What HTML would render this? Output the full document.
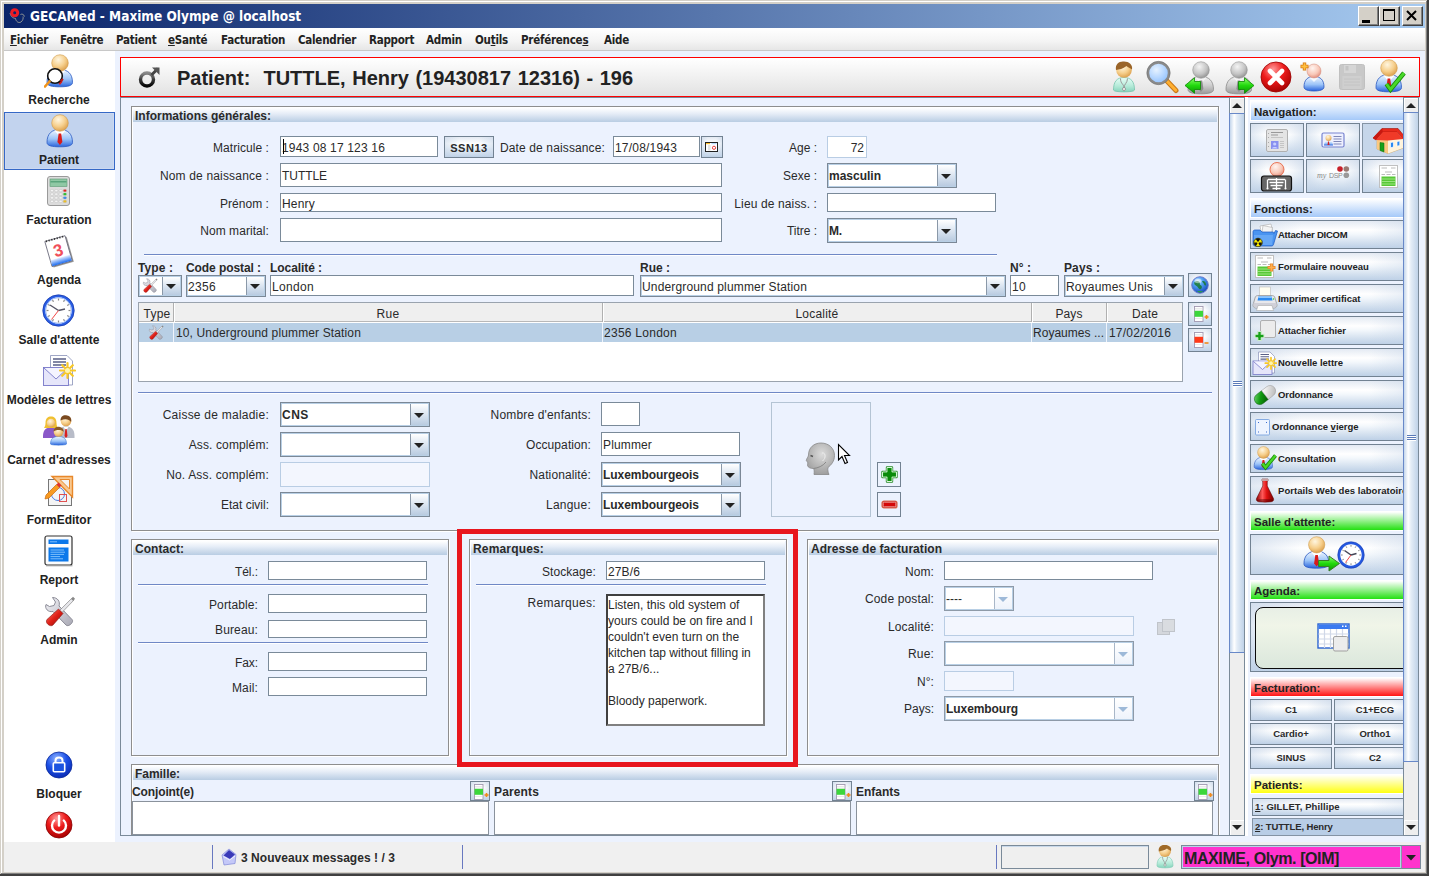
<!DOCTYPE html><html><head><meta charset="utf-8"><title>GECAMed</title><style>
*{box-sizing:border-box;margin:0;padding:0}
html,body{width:1429px;height:876px;overflow:hidden;background:#d4d0c8}
body{font-family:"Liberation Sans",sans-serif;font-size:12px;color:#2a2a2a;position:relative}
.a{position:absolute}
.t{position:absolute;white-space:nowrap;line-height:14px;height:14px}
.b{font-weight:bold}
.r{text-align:right}
.c{text-align:center}
.tf{position:absolute;background:#fff;border:1px solid #7a8a99;white-space:nowrap;overflow:hidden;padding-left:1px}
.tfd{position:absolute;background:#f3f6fe;border:1px solid #b9cde4;}
.cb{position:absolute;background:#fff;border:1px solid #7b8896;box-shadow:inset 0 0 0 1px #b8cfe5;white-space:nowrap;overflow:hidden;padding-left:1px}
.cb .ar{position:absolute;right:1px;top:1px;bottom:1px;width:18px;border-left:1px solid #8a98a8;background:linear-gradient(#fff,#dbe5f1 50%,#b9cbe0)}
.cb .ar:after{content:"";position:absolute;left:3px;top:50%;margin-top:-2px;border:5px solid transparent;border-top:5px solid #222;border-bottom:0}
.cbd{border-color:#8e9aa8}
.cbd .ar{background:linear-gradient(#fff,#eef3fb);border-left-color:#a9b7c8}
.cbd .ar:after{border-top-color:#9db9d8}
.pn{position:absolute;border:1px solid #8e8e8e;box-shadow:inset 1px 1px 0 #fff,1px 1px 0 #fff}
.ph{position:absolute;left:1px;right:1px;top:1px;height:14px;background:linear-gradient(#ffffff,#e6edf7 40%,#b9cde3);}
.sep{position:absolute;height:1px;background:#6f88c6;box-shadow:0 1px 0 #fff}
.btn{position:absolute;border:1px solid #728292;background:linear-gradient(90deg,rgba(196,212,232,.5),rgba(255,255,255,0) 30%,rgba(255,255,255,0) 70%,rgba(196,212,232,.5)),linear-gradient(#e4eaf3,#ffffff 33%,#f4f8fc 48%,#bdd0e6)}
</style></head><body>
<div class="a" style="left:0px;top:0px;width:1429px;height:876px;background:#d4d0c8"></div>
<div class="a" style="left:1px;top:1px;width:1427px;height:1px;background:#fff"></div>
<div class="a" style="left:1px;top:1px;width:1px;height:873px;background:#fff"></div>
<div class="a" style="left:1427px;top:0px;width:2px;height:876px;background:#404040"></div>
<div class="a" style="left:0px;top:874px;width:1429px;height:2px;background:#404040"></div>
<div class="a" style="left:1426px;top:1px;width:1px;height:873px;background:#808080"></div>
<div class="a" style="left:1px;top:873px;width:1426px;height:1px;background:#808080"></div>
<div class="a" style="left:4px;top:4px;width:1421px;height:24px;background:linear-gradient(90deg,#0a246a,#a6caf0)"></div>
<div class="t b" style="left:30px;top:6px;height:20px;line-height:20px;font-size:13.5px;color:#fff;font-family:'DejaVu Sans Condensed','Liberation Sans',sans-serif">GECAMed - Maxime Olympe @ localhost</div>
<div class="a" style="left:4px;top:28px;width:1421px;height:23px;background:linear-gradient(#fff,#f4f4f4 60%,#e6e6e6);border-bottom:1px solid #c8c8c8"></div>
<div class="a" style="left:4px;top:51px;width:111px;height:791px;background:#fff"></div>
<div class="a" style="left:115px;top:51px;width:1310px;height:791px;background:#ecf2fe"></div>
<div class="a" style="left:4px;top:842px;width:1421px;height:30px;background:#f0f0f0"></div>
<div class="a" style="left:1358px;top:6px;width:21px;height:20px;background:#d4d0c8;border:1px solid;border-color:#fff #404040 #404040 #fff;box-shadow:inset -1px -1px 0 #808080"></div>
<div class="a" style="left:1379px;top:6px;width:21px;height:20px;background:#d4d0c8;border:1px solid;border-color:#fff #404040 #404040 #fff;box-shadow:inset -1px -1px 0 #808080"></div>
<div class="a" style="left:1402px;top:6px;width:21px;height:20px;background:#d4d0c8;border:1px solid;border-color:#fff #404040 #404040 #fff;box-shadow:inset -1px -1px 0 #808080"></div>
<div class="a" style="left:1362px;top:20px;width:8px;height:3px;background:#000"></div>
<div class="a" style="left:1383px;top:9px;width:12px;height:12px;border:1px solid #000;border-top-width:2px"></div>
<svg class="a" style="left:1406px;top:10px" width="12" height="11"><path d="M1 1 L10 10 M10 1 L1 10" stroke="#000" stroke-width="2" fill="none"/></svg>
<div class="t b" style="left:10px;top:33px;font-family:'DejaVu Sans Condensed','Liberation Sans',sans-serif;font-size:11.5px;letter-spacing:-0.25px;color:#222"><u>F</u>ichier</div>
<div class="t b" style="left:60px;top:33px;font-family:'DejaVu Sans Condensed','Liberation Sans',sans-serif;font-size:11.5px;letter-spacing:-0.25px;color:#222">Fenêtre</div>
<div class="t b" style="left:116px;top:33px;font-family:'DejaVu Sans Condensed','Liberation Sans',sans-serif;font-size:11.5px;letter-spacing:-0.25px;color:#222">Patient</div>
<div class="t b" style="left:168px;top:33px;font-family:'DejaVu Sans Condensed','Liberation Sans',sans-serif;font-size:11.5px;letter-spacing:-0.25px;color:#222"><u>e</u>Santé</div>
<div class="t b" style="left:221px;top:33px;font-family:'DejaVu Sans Condensed','Liberation Sans',sans-serif;font-size:11.5px;letter-spacing:-0.25px;color:#222">Facturation</div>
<div class="t b" style="left:298px;top:33px;font-family:'DejaVu Sans Condensed','Liberation Sans',sans-serif;font-size:11.5px;letter-spacing:-0.25px;color:#222">Calendrier</div>
<div class="t b" style="left:369px;top:33px;font-family:'DejaVu Sans Condensed','Liberation Sans',sans-serif;font-size:11.5px;letter-spacing:-0.25px;color:#222">Rapport</div>
<div class="t b" style="left:426px;top:33px;font-family:'DejaVu Sans Condensed','Liberation Sans',sans-serif;font-size:11.5px;letter-spacing:-0.25px;color:#222">Admin</div>
<div class="t b" style="left:475px;top:33px;font-family:'DejaVu Sans Condensed','Liberation Sans',sans-serif;font-size:11.5px;letter-spacing:-0.25px;color:#222">Ou<u>t</u>ils</div>
<div class="t b" style="left:521px;top:33px;font-family:'DejaVu Sans Condensed','Liberation Sans',sans-serif;font-size:11.5px;letter-spacing:-0.25px;color:#222">Préférence<u>s</u></div>
<div class="t b" style="left:604px;top:33px;font-family:'DejaVu Sans Condensed','Liberation Sans',sans-serif;font-size:11.5px;letter-spacing:-0.25px;color:#222">Aide</div>
<div class="a" style="left:4px;top:112px;width:111px;height:58px;background:#c2d3ee;border:1px solid #3568c6;box-shadow:inset 0 0 0 1px #ccd9f1"></div>
<div class="t c b" style="left:-91px;width:300px;top:93px;font-size:12px;color:#222">Recherche</div>
<div class="t c b" style="left:-91px;width:300px;top:153px;font-size:12px;color:#222">Patient</div>
<div class="t c b" style="left:-91px;width:300px;top:213px;font-size:12px;color:#222">Facturation</div>
<div class="t c b" style="left:-91px;width:300px;top:273px;font-size:12px;color:#222">Agenda</div>
<div class="t c b" style="left:-91px;width:300px;top:333px;font-size:12px;color:#222">Salle d'attente</div>
<div class="t c b" style="left:-91px;width:300px;top:393px;font-size:12px;color:#222">Modèles de lettres</div>
<div class="t c b" style="left:-91px;width:300px;top:453px;font-size:12px;color:#222">Carnet d'adresses</div>
<div class="t c b" style="left:-91px;width:300px;top:513px;font-size:12px;color:#222">FormEditor</div>
<div class="t c b" style="left:-91px;width:300px;top:573px;font-size:12px;color:#222">Report</div>
<div class="t c b" style="left:-91px;width:300px;top:633px;font-size:12px;color:#222">Admin</div>
<div class="t c b" style="left:-91px;width:300px;top:787px;font-size:12px;color:#222">Bloquer</div>
<div class="a" style="left:212px;top:845px;width:1px;height:24px;background:#6878c0"></div>
<div class="a" style="left:462px;top:845px;width:1px;height:24px;background:#6878c0"></div>
<div class="a" style="left:996px;top:845px;width:1px;height:24px;background:#6878c0"></div>
<div class="t b" style="left:241px;top:851px;letter-spacing:0.050px;">3 Nouveaux messages ! / 3</div>
<div class="a" style="left:1001px;top:845px;width:148px;height:24px;background:#efefef;border:1px solid #7a8a99;box-shadow:inset 0 1px 0 #c8d8ea"></div>
<div class="a" style="left:1181px;top:845px;width:240px;height:24px;background:#ff33cc;border:1px solid #7a8a99"></div>
<div class="a" style="left:1182px;top:846px;width:219px;height:22px;background:#ff33cc;border:1px solid #b8d4e8"></div>
<div class="t b" style="left:1184px;top:849px;height:20px;line-height:20px;font-size:16px;letter-spacing:-0.404px;color:#222">MAXIME, Olym. [OIM]</div>
<div class="a" style="left:1401px;top:846px;width:1px;height:22px;background:#8a98a8"></div>
<svg class="a" style="left:1406px;top:855px" width="10" height="6"><path d="M0 0H10L5 5.5Z" fill="#222"/></svg>
<div class="a" style="left:120px;top:57px;width:1300px;height:40px;background:linear-gradient(#fff,#f2f2f2 45%,#e2e2e2);border:1px solid #f00;box-shadow:0 1px 0 #c0c8d8"></div>
<div class="t b" style="left:177px;top:66px;height:24px;line-height:24px;font-size:20px;color:#222;word-spacing:1px">Patient:&nbsp; TUTTLE, Henry (19430817 12316) - 196</div>
<div class="a" style="left:120px;top:97px;width:1110px;height:739px;border-left:1px solid #7a8a99;border-top:1px solid #7a8a99"></div>
<div class="a" style="left:1229px;top:97px;width:16px;height:739px;background:#eeeeee;border:1px solid #7a8a99"></div>
<div class="a" style="left:1230px;top:98px;width:14px;height:15px;background:#eeeeee;border-top:1px solid #fff;border-left:1px solid #fff"></div>
<div class="a" style="left:1230px;top:820px;width:14px;height:15px;background:#eeeeee;border-top:1px solid #fff;border-left:1px solid #fff"></div>
<svg class="a" style="left:1232px;top:103px" width="10" height="5"><path d="M0 5H10L5 0Z" fill="#222"/></svg>
<svg class="a" style="left:1232px;top:825px" width="10" height="5"><path d="M0 0H10L5 5Z" fill="#222"/></svg>
<div class="a" style="left:1229px;top:113px;width:16px;height:540px;background:linear-gradient(90deg,#c4d6ec,#ffffff 30%,#e4edf7 50%,#bfd2e8);border:1px solid #6888c8;border-right-color:#7a8a99"></div>
<div class="a" style="left:1233px;top:381px;width:9px;height:1px;background:#5a7ab8;box-shadow:0 1px 0 #fff"></div>
<div class="a" style="left:1233px;top:383px;width:9px;height:1px;background:#5a7ab8;box-shadow:0 1px 0 #fff"></div>
<div class="a" style="left:1233px;top:385px;width:9px;height:1px;background:#5a7ab8;box-shadow:0 1px 0 #fff"></div>
<div class="a" style="left:1245px;top:97px;width:3px;height:739px;background:#fff"></div>
<div class="a" style="left:1403px;top:97px;width:16px;height:739px;background:#eeeeee;border:1px solid #7a8a99"></div>
<div class="a" style="left:1404px;top:98px;width:14px;height:15px;background:#eeeeee;border-top:1px solid #fff;border-left:1px solid #fff"></div>
<div class="a" style="left:1404px;top:820px;width:14px;height:15px;background:#eeeeee;border-top:1px solid #fff;border-left:1px solid #fff"></div>
<svg class="a" style="left:1406px;top:103px" width="10" height="5"><path d="M0 5H10L5 0Z" fill="#222"/></svg>
<svg class="a" style="left:1406px;top:825px" width="10" height="5"><path d="M0 0H10L5 5Z" fill="#222"/></svg>
<div class="a" style="left:1403px;top:112px;width:16px;height:650px;background:linear-gradient(90deg,#c4d6ec,#ffffff 30%,#e4edf7 50%,#bfd2e8);border:1px solid #6888c8;border-right-color:#7a8a99"></div>
<div class="a" style="left:1407px;top:435px;width:9px;height:1px;background:#5a7ab8;box-shadow:0 1px 0 #fff"></div>
<div class="a" style="left:1407px;top:437px;width:9px;height:1px;background:#5a7ab8;box-shadow:0 1px 0 #fff"></div>
<div class="a" style="left:1407px;top:439px;width:9px;height:1px;background:#5a7ab8;box-shadow:0 1px 0 #fff"></div>
<div class="pn" style="left:131px;top:106px;width:1088px;height:425px"><div class="ph"></div></div>
<div class="t b" style="left:135px;top:109px;letter-spacing:-0.001px;">Informations générales:</div>
<div class="t r " style="left:-31px;width:300px;top:141px;letter-spacing:0.059px;">Matricule :</div>
<div class="tf" style="left:280px;top:136px;width:158px;height:21px;line-height:22px;letter-spacing:0.171px;">1943 08 17 123 16</div>
<div class="a" style="left:283px;top:139px;width:1px;height:15px;background:#000"></div>
<div class="btn" style="left:444px;top:136px;width:50px;height:22px"></div>
<div class="t c b" style="left:319px;width:300px;top:141px;font-size:11px;letter-spacing:0.55px">SSN13</div>
<div class="t " style="left:500px;top:141px;letter-spacing:0.126px;">Date de naissance:</div>
<div class="tf" style="left:613px;top:136px;width:87px;height:21px;line-height:22px;letter-spacing:0.194px;">17/08/1943</div>
<div class="btn" style="left:701px;top:136px;width:22px;height:22px"></div>
<div class="t r " style="left:-31px;width:300px;top:169px;letter-spacing:0.169px;">Nom de naissance :</div>
<div class="tf" style="left:280px;top:163px;width:442px;height:24px;line-height:25px;letter-spacing:-0.056px;">TUTTLE</div>
<div class="t r " style="left:-31px;width:300px;top:197px;letter-spacing:0.039px;">Prénom :</div>
<div class="tf" style="left:280px;top:193px;width:442px;height:19px;line-height:20px;letter-spacing:0.198px;">Henry</div>
<div class="t r " style="left:-31px;width:300px;top:224px;letter-spacing:0.066px;">Nom marital:</div>
<div class="tf" style="left:280px;top:218px;width:442px;height:24px;line-height:25px;"></div>
<div class="t r " style="left:517px;width:300px;top:141px;letter-spacing:-0.004px;">Age :</div>
<div class="tfd" style="left:827px;top:136px;width:40px;height:22px;line-height:22px;text-align:right;padding-right:2px;background:#fff">72</div>
<div class="t r " style="left:517px;width:300px;top:169px;letter-spacing:-0.003px;">Sexe :</div>
<div class="cb" style="left:827px;top:163px;width:130px;height:25px;line-height:25px;font-weight:bold;letter-spacing:-0.003px;">masculin<span class="ar"></span></div>
<div class="t r " style="left:517px;width:300px;top:197px;letter-spacing:0.124px;">Lieu de naiss. :</div>
<div class="tf" style="left:827px;top:193px;width:169px;height:19px;line-height:20px;"></div>
<div class="t r " style="left:517px;width:300px;top:224px;letter-spacing:-0.032px;">Titre :</div>
<div class="cb" style="left:827px;top:218px;width:130px;height:25px;line-height:25px;font-weight:bold;letter-spacing:-0.165px;">M.<span class="ar"></span></div>
<div class="sep" style="left:144px;top:254px;width:853px"></div>
<div class="t b" style="left:138px;top:261px;letter-spacing:0.092px;">Type :</div>
<div class="t b" style="left:186px;top:261px;letter-spacing:-0.077px;">Code postal :</div>
<div class="t b" style="left:270px;top:261px;letter-spacing:-0.068px;">Localité :</div>
<div class="t b" style="left:640px;top:261px;letter-spacing:-0.000px;">Rue :</div>
<div class="t b" style="left:1010px;top:261px;letter-spacing:0.051px;">N° :</div>
<div class="t b" style="left:1064px;top:261px;letter-spacing:0.107px;">Pays :</div>
<div class="cb" style="left:138px;top:275px;width:44px;height:22px;line-height:22px;font-weight:bold;"><span class="ar"></span></div>
<div class="cb" style="left:186px;top:275px;width:80px;height:22px;line-height:22px;letter-spacing:0.326px;">2356<span class="ar"></span></div>
<div class="tf" style="left:270px;top:275px;width:364px;height:21px;line-height:22px;letter-spacing:0.326px;">London</div>
<div class="cb" style="left:640px;top:275px;width:366px;height:22px;line-height:22px;letter-spacing:0.157px;">Underground plummer Station<span class="ar"></span></div>
<div class="tf" style="left:1010px;top:275px;width:49px;height:21px;line-height:22px;letter-spacing:0.326px;">10</div>
<div class="cb" style="left:1064px;top:275px;width:120px;height:22px;line-height:22px;letter-spacing:0.177px;">Royaumes Unis<span class="ar"></span></div>
<div class="btn" style="left:1188px;top:273px;width:24px;height:24px"></div>
<div class="a" style="left:138px;top:302px;width:1045px;height:80px;background:#fff;border:1px solid #9aa3ae"></div>
<div class="a" style="left:139px;top:303px;width:1043px;height:19px;background:#efefef;border-bottom:1px solid #b8b8b8"></div>
<div class="a" style="left:173px;top:303px;width:1px;height:19px;background:#b0b0b0"></div>
<div class="a" style="left:174px;top:303px;width:1px;height:19px;background:#fff"></div>
<div class="a" style="left:602px;top:303px;width:1px;height:19px;background:#b0b0b0"></div>
<div class="a" style="left:603px;top:303px;width:1px;height:19px;background:#fff"></div>
<div class="a" style="left:1031px;top:303px;width:1px;height:19px;background:#b0b0b0"></div>
<div class="a" style="left:1032px;top:303px;width:1px;height:19px;background:#fff"></div>
<div class="a" style="left:1106px;top:303px;width:1px;height:19px;background:#b0b0b0"></div>
<div class="a" style="left:1107px;top:303px;width:1px;height:19px;background:#fff"></div>
<div class="t c " style="left:7px;width:300px;top:307px;letter-spacing:0.246px;">Type</div>
<div class="t c " style="left:238px;width:300px;top:307px;letter-spacing:0.329px;">Rue</div>
<div class="t c " style="left:667px;width:300px;top:307px;letter-spacing:0.205px;">Localité</div>
<div class="t c " style="left:919px;width:300px;top:307px;letter-spacing:0.081px;">Pays</div>
<div class="t c " style="left:995px;width:300px;top:307px;letter-spacing:0.163px;">Date</div>
<div class="a" style="left:139px;top:323px;width:1043px;height:19px;background:#b8cfe5"></div>
<div class="a" style="left:173px;top:323px;width:1px;height:19px;background:#eef3fb"></div>
<div class="a" style="left:602px;top:323px;width:1px;height:19px;background:#eef3fb"></div>
<div class="a" style="left:1031px;top:323px;width:1px;height:19px;background:#eef3fb"></div>
<div class="a" style="left:1106px;top:323px;width:1px;height:19px;background:#eef3fb"></div>
<div class="t " style="left:176px;top:326px;letter-spacing:0.136px;">10, Underground plummer Station</div>
<div class="t " style="left:604px;top:326px;letter-spacing:0.266px;">2356 London</div>
<div class="t " style="left:1033px;top:326px;letter-spacing:0.025px;">Royaumes ...</div>
<div class="t " style="left:1109px;top:326px;letter-spacing:0.194px;">17/02/2016</div>
<div class="btn" style="left:1188px;top:302px;width:24px;height:24px"></div>
<div class="btn" style="left:1188px;top:328px;width:24px;height:24px"></div>
<div class="sep" style="left:138px;top:392px;width:1074px"></div>
<div class="t r " style="left:-31px;width:300px;top:408px;letter-spacing:0.236px;">Caisse de maladie:</div>
<div class="cb" style="left:280px;top:402px;width:150px;height:25px;line-height:25px;font-weight:bold;letter-spacing:0.5px">CNS<span class="ar"></span></div>
<div class="t r " style="left:-31px;width:300px;top:438px;letter-spacing:0.124px;">Ass. complém:</div>
<div class="cb" style="left:280px;top:432px;width:150px;height:25px;line-height:25px;font-weight:bold;"><span class="ar"></span></div>
<div class="t r " style="left:-31px;width:300px;top:468px;letter-spacing:0.163px;">No. Ass. complém:</div>
<div class="tfd" style="left:280px;top:462px;width:150px;height:25px;line-height:25px;"></div>
<div class="t r " style="left:-31px;width:300px;top:498px;letter-spacing:-0.001px;">Etat civil:</div>
<div class="cb" style="left:280px;top:492px;width:150px;height:25px;line-height:25px;font-weight:bold;"><span class="ar"></span></div>
<div class="t r " style="left:291px;width:300px;top:408px;letter-spacing:0.160px;">Nombre d'enfants:</div>
<div class="tf" style="left:601px;top:402px;width:39px;height:24px;line-height:25px;"></div>
<div class="t r " style="left:291px;width:300px;top:438px;letter-spacing:0.087px;">Occupation:</div>
<div class="tf" style="left:601px;top:432px;width:139px;height:24px;line-height:25px;letter-spacing:0.142px;">Plummer</div>
<div class="t r " style="left:291px;width:300px;top:468px;letter-spacing:0.114px;">Nationalité:</div>
<div class="cb" style="left:601px;top:462px;width:140px;height:25px;line-height:25px;font-weight:bold;letter-spacing:-0.049px;">Luxembourgeois<span class="ar"></span></div>
<div class="t r " style="left:291px;width:300px;top:498px;letter-spacing:0.232px;">Langue:</div>
<div class="cb" style="left:601px;top:492px;width:140px;height:25px;line-height:25px;font-weight:bold;letter-spacing:-0.049px;">Luxembourgeois<span class="ar"></span></div>
<div class="a" style="left:771px;top:402px;width:100px;height:115px;border:1px solid #b4c4d4"></div>
<div class="btn" style="left:877px;top:462px;width:24px;height:25px;background:#ecf2fe"></div>
<div class="btn" style="left:877px;top:492px;width:24px;height:25px;background:#ecf2fe"></div>
<div class="pn" style="left:131px;top:539px;width:318px;height:217px"><div class="ph"></div></div>
<div class="t b" style="left:135px;top:542px;letter-spacing:0.042px;">Contact:</div>
<div class="t r " style="left:-42px;width:300px;top:565px;letter-spacing:-0.068px;">Tél.:</div>
<div class="tf" style="left:268px;top:561px;width:159px;height:19px;line-height:20px;"></div>
<div class="sep" style="left:138px;top:584px;width:290px"></div>
<div class="t r " style="left:-42px;width:300px;top:598px;letter-spacing:0.108px;">Portable:</div>
<div class="tf" style="left:268px;top:594px;width:159px;height:19px;line-height:20px;"></div>
<div class="t r " style="left:-42px;width:300px;top:623px;letter-spacing:0.139px;">Bureau:</div>
<div class="tf" style="left:268px;top:620px;width:159px;height:18px;line-height:19px;"></div>
<div class="sep" style="left:138px;top:642px;width:290px"></div>
<div class="t r " style="left:-42px;width:300px;top:656px;letter-spacing:-0.085px;">Fax:</div>
<div class="tf" style="left:268px;top:652px;width:159px;height:19px;line-height:20px;"></div>
<div class="t r " style="left:-42px;width:300px;top:681px;letter-spacing:0.133px;">Mail:</div>
<div class="tf" style="left:268px;top:677px;width:159px;height:19px;line-height:20px;"></div>
<div class="pn" style="left:469px;top:539px;width:318px;height:217px"><div class="ph"></div></div>
<div class="t b" style="left:473px;top:542px;letter-spacing:0.164px;">Remarques:</div>
<div class="t r " style="left:296px;width:300px;top:565px;letter-spacing:0.070px;">Stockage:</div>
<div class="tf" style="left:606px;top:561px;width:159px;height:19px;line-height:20px;letter-spacing:0.128px;">27B/6</div>
<div class="sep" style="left:476px;top:584px;width:290px"></div>
<div class="t r " style="left:296px;width:300px;top:596px;letter-spacing:0.304px;">Remarques:</div>
<div class="a" style="left:606px;top:594px;width:159px;height:132px;background:#fff;border:2px solid;border-color:#404040 #808080 #808080 #404040"></div>
<div class="t " style="left:608px;top:598px;color:#333letter-spacing:0.023px;">Listen, this old system of</div>
<div class="t " style="left:608px;top:614px;color:#333letter-spacing:0.080px;">yours could be on fire and I</div>
<div class="t " style="left:608px;top:630px;color:#333letter-spacing:0.078px;">couldn't even turn on the</div>
<div class="t " style="left:608px;top:646px;color:#333letter-spacing:0.108px;">kitchen tap without filling in</div>
<div class="t " style="left:608px;top:662px;color:#333letter-spacing:-0.037px;">a 27B/6...</div>
<div class="t " style="left:608px;top:694px;color:#333letter-spacing:0.154px;">Bloody paperwork.</div>
<div class="a" style="left:457px;top:529px;width:341px;height:238px;border:5px solid #e8161e;z-index:5"></div>
<div class="pn" style="left:807px;top:539px;width:412px;height:217px"><div class="ph"></div></div>
<div class="t b" style="left:811px;top:542px;letter-spacing:0.044px;">Adresse de facturation</div>
<div class="t r " style="left:634px;width:300px;top:565px;letter-spacing:0.082px;">Nom:</div>
<div class="tf" style="left:944px;top:561px;width:209px;height:19px;line-height:20px;"></div>
<div class="t r " style="left:634px;width:300px;top:592px;letter-spacing:0.135px;">Code postal:</div>
<div class="cb cbd" style="left:944px;top:586px;width:70px;height:25px;line-height:25px;letter-spacing:0.004px;">----<span class="ar"></span></div>
<div class="t r " style="left:634px;width:300px;top:620px;letter-spacing:0.145px;">Localité:</div>
<div class="tfd" style="left:944px;top:616px;width:190px;height:20px;line-height:20px;"></div>
<div class="t r " style="left:634px;width:300px;top:647px;letter-spacing:0.163px;">Rue:</div>
<div class="cb cbd" style="left:944px;top:641px;width:190px;height:25px;line-height:25px;font-weight:bold;"><span class="ar"></span></div>
<div class="t r " style="left:634px;width:300px;top:675px;letter-spacing:0.067px;">N°:</div>
<div class="tfd" style="left:944px;top:671px;width:70px;height:20px;line-height:20px;"></div>
<div class="t r " style="left:634px;width:300px;top:702px;letter-spacing:-0.002px;">Pays:</div>
<div class="cb cbd" style="left:944px;top:696px;width:190px;height:25px;line-height:25px;font-weight:bold;letter-spacing:-0.067px;">Luxembourg<span class="ar"></span></div>
<div class="a" style="left:1157px;top:622px;width:13px;height:13px;background:#d4d7dc;border:1px solid #c0c4ca"></div>
<div class="a" style="left:1162px;top:619px;width:13px;height:13px;background:#d9dce0;border:1px solid #c0c4ca"></div>
<div class="pn" style="left:131px;top:764px;width:1088px;height:71px;border-bottom:0"><div class="ph"></div></div>
<div class="t b" style="left:135px;top:767px;letter-spacing:-0.043px;">Famille:</div>
<div class="t b" style="left:132px;top:785px;letter-spacing:-0.120px;">Conjoint(e)</div>
<div class="a" style="left:132px;top:801px;width:357px;height:34px;background:#fff;border:1px solid #8a929c"></div>
<div class="btn" style="left:470px;top:781px;width:20px;height:20px"></div>
<div class="t b" style="left:494px;top:785px;letter-spacing:0.140px;">Parents</div>
<div class="a" style="left:494px;top:801px;width:357px;height:34px;background:#fff;border:1px solid #8a929c"></div>
<div class="btn" style="left:832px;top:781px;width:20px;height:20px"></div>
<div class="t b" style="left:856px;top:785px;letter-spacing:-0.001px;">Enfants</div>
<div class="a" style="left:856px;top:801px;width:357px;height:34px;background:#fff;border:1px solid #8a929c"></div>
<div class="btn" style="left:1194px;top:781px;width:20px;height:20px"></div>
<div class="a" style="left:117px;top:836px;width:1127px;height:6px;background:#ecf2fe"></div>
<div class="a" style="left:120px;top:835px;width:1110px;height:1px;background:#7a8a99"></div>
<div class="a" style="left:1250px;top:97px;width:153px;height:739px;overflow:hidden">
<div class="a" style="left:0px;top:3px;width:160px;height:21px;background:linear-gradient(#fff,#a5c9f9);border:1px solid #fff"></div>
<div class="t b" style="left:4px;top:8px;font-size:11.5px;color:#222">Navigation:</div>
<div class="btn" style="left:0px;top:26px;width:54px;height:34px;"></div>
<div class="btn" style="left:56px;top:26px;width:54px;height:34px;"></div>
<div class="a" style="left:112px;top:26px;width:54px;height:34px;background:#c6d6ea;border:1px solid #8493a4"></div>
<div class="btn" style="left:0px;top:62px;width:54px;height:34px;"></div>
<div class="btn" style="left:56px;top:62px;width:54px;height:34px;"></div>
<div class="btn" style="left:112px;top:62px;width:54px;height:34px;"></div>
<div class="a" style="left:0px;top:101px;width:160px;height:20px;background:linear-gradient(#fff,#a5c9f9);border:1px solid #fff"></div>
<div class="t b" style="left:4px;top:105px;font-size:11.5px;color:#222">Fonctions:</div>
<div class="btn" style="left:0px;top:123px;width:170px;height:29px;"></div>
<div class="t b" style="left:28px;top:131px;font-size:9.5px;letter-spacing:-0.253px;color:#222">Attacher DICOM</div>
<div class="btn" style="left:0px;top:155px;width:170px;height:29px;"></div>
<div class="t b" style="left:28px;top:163px;font-size:9.5px;letter-spacing:0.006px;color:#222">Formulaire nouveau</div>
<div class="btn" style="left:0px;top:187px;width:170px;height:29px;"></div>
<div class="t b" style="left:28px;top:195px;font-size:9.5px;letter-spacing:-0.031px;color:#222">Imprimer certificat</div>
<div class="btn" style="left:0px;top:219px;width:170px;height:29px;"></div>
<div class="t b" style="left:28px;top:227px;font-size:9.5px;letter-spacing:-0.118px;color:#222">Attacher fichier</div>
<div class="btn" style="left:0px;top:251px;width:170px;height:29px;"></div>
<div class="t b" style="left:28px;top:259px;font-size:9.5px;letter-spacing:-0.031px;color:#222">Nouvelle lettre</div>
<div class="btn" style="left:0px;top:283px;width:170px;height:29px;"></div>
<div class="t b" style="left:28px;top:291px;font-size:9.5px;letter-spacing:-0.095px;color:#222">Ordonnance</div>
<div class="btn" style="left:0px;top:315px;width:170px;height:29px;"></div>
<div class="t b" style="left:22px;top:323px;font-size:9.5px;letter-spacing:0.001px;color:#222">Ordonnance <u>v</u>ierge</div>
<div class="btn" style="left:0px;top:347px;width:170px;height:29px;"></div>
<div class="t b" style="left:28px;top:355px;font-size:9.5px;letter-spacing:-0.021px;color:#222">Consultation</div>
<div class="btn" style="left:0px;top:379px;width:170px;height:29px;"></div>
<div class="t b" style="left:28px;top:387px;font-size:9.5px;letter-spacing:0.042px;color:#222">Portails Web des laboratoires</div>
<div class="a" style="left:0px;top:414px;width:160px;height:20px;background:linear-gradient(#fff,#24e012);border:1px solid #fff"></div>
<div class="t b" style="left:4px;top:418px;font-size:11.5px;color:#222">Salle d'attente:</div>
<div class="btn" style="left:0px;top:437px;width:170px;height:41px;"></div>
<div class="a" style="left:0px;top:483px;width:160px;height:20px;background:linear-gradient(#fff,#24e012);border:1px solid #fff"></div>
<div class="t b" style="left:4px;top:487px;font-size:11.5px;color:#222">Agenda:</div>
<div class="btn" style="left:0px;top:505px;width:170px;height:70px;"></div>
<div class="a" style="left:4.5px;top:509.5px;width:170px;height:62px;background:linear-gradient(#e8efe6,#f0f5e8 30%,#dbe7dc);border:1.5px solid #0a0a0a;border-radius:8px"></div>
<div class="a" style="left:0px;top:580px;width:160px;height:20px;background:linear-gradient(#fff,#ff1414);border:1px solid #fff"></div>
<div class="t b" style="left:4px;top:584px;font-size:11.5px;color:#222">Facturation:</div>
<div class="btn" style="left:0px;top:602px;width:82px;height:22px;"></div>
<div class="btn" style="left:84px;top:602px;width:82px;height:22px;"></div>
<div class="t b c" style="left:0;width:82px;top:606px;font-size:9.5px">C1</div>
<div class="t b c" style="left:84px;width:82px;top:606px;font-size:9.5px">C1+ECG</div>
<div class="btn" style="left:0px;top:626px;width:82px;height:22px;"></div>
<div class="btn" style="left:84px;top:626px;width:82px;height:22px;"></div>
<div class="t b c" style="left:0;width:82px;top:630px;font-size:9.5px">Cardio+</div>
<div class="t b c" style="left:84px;width:82px;top:630px;font-size:9.5px">Ortho1</div>
<div class="btn" style="left:0px;top:650px;width:82px;height:22px;"></div>
<div class="btn" style="left:84px;top:650px;width:82px;height:22px;"></div>
<div class="t b c" style="left:0;width:82px;top:654px;font-size:9.5px">SINUS</div>
<div class="t b c" style="left:84px;width:82px;top:654px;font-size:9.5px">C2</div>
<div class="a" style="left:0px;top:677px;width:160px;height:20px;background:linear-gradient(#fff,#ffff14);border:1px solid #fff"></div>
<div class="t b" style="left:4px;top:681px;font-size:11.5px;color:#222">Patients:</div>
<div class="btn" style="left:2px;top:701px;width:170px;height:18px;"></div>
<div class="a" style="left:2px;top:721px;width:170px;height:18px;background:#b8cde6;border:1px solid #8493a4"></div>
<div class="t b" style="left:5px;top:703px;font-size:9.5px;letter-spacing:0.096px;"><u>1</u>: GILLET, Phillipe</div>
<div class="t b" style="left:5px;top:723px;font-size:9.5px;letter-spacing:-0.125px;"><u>2</u>: TUTTLE, Henry</div>
<svg class="a" style="left:16px;top:32px" width="22" height="23"><rect x=".5" y=".5" width="21" height="22" rx="1.500" fill="#e4e4e4" stroke="#b0b0b0"/><path d="M5 3.500H17M5 6H12" stroke="#999" stroke-width="1"/><path d="M5 8.500H17" stroke="#bbb" stroke-width=".8"/><rect x="5" y="12" width="7.500" height="8" fill="#8890f0"/><circle cx="8.700" cy="15" r="1.600" fill="#c8d0ff"/><path d="M6 19.500C6 17.500 11.500 17.500 11.500 19.500Z" fill="#c8d0ff"/><path d="M14 12.500H18M14 14.500H18M14 16.500H18M14 18.500H18" stroke="#bbb" stroke-width=".8"/><path d="M2 4.500H3M2 8.500H3M2 13.500H3M2 17.500H3" stroke="#aaa" stroke-width="1"/></svg>
<svg class="a" style="left:71px;top:35px" width="24" height="16"><rect x="1" y="1" width="22" height="14" rx="1.500" fill="#eef0ff" stroke="#7884d0" stroke-width="1.200"/><path d="M12.500 4.500H20.500M12.500 7H20.500M12.500 9.500H20.500M12.500 12H20.500" stroke="#8088b8" stroke-width="1"/><path d="M3 13.500C3 10 5 9 7.500 9S12 10 12 13.500Z" fill="url(#gBlueB)"/><path d="M7 9.500H8L8.500 13H6.500Z" fill="#d82020"/><circle cx="7.500" cy="6" r="3" fill="url(#gSkin)"/></svg>
<svg class="a" style="left:122px;top:30px" width="34" height="27"><path d="M5 12V22L16 26.500L31 21V11Z" fill="#ffe4b0" stroke="#c89a50" stroke-width=".6"/><path d="M16 13V26.500L31 21V11Z" fill="#fff4dc"/><path d="M5 12L16 13V26.500L5 22Z" fill="#fcc880"/><path d="M1 11L10 1.500H26L33.500 10.500L31 12L25 5H11L4 13Z" fill="#e82a1c" stroke="#a01008" stroke-width=".6"/><path d="M10 1.500L1 11L4 13L11 5Z" fill="#c81810"/><path d="M11 5H25L31 12L16 13.500L4 13Z" fill="#f03a28"/><path d="M8 15.500L12 16V25L8 23.500Z" fill="#1aa01a" stroke="#0a700a" stroke-width=".5"/><path d="M18.500 15.500L21.500 15V20L18.500 20.800Z" fill="#2a8af0" stroke="#fff" stroke-width=".7"/><path d="M25 14.500L27.800 14V18.500L25 19.200Z" fill="#2a8af0" stroke="#fff" stroke-width=".7"/></svg>
<svg class="a" style="left:10px;top:64px" width="34" height="31"><circle cx="17" cy="8.500" r="7" fill="url(#gPink)" stroke="#e86a4a" stroke-width=".9"/><rect x="1.500" y="15" width="30" height="15" rx="2.500" fill="#666" stroke="#111" stroke-width="1.200"/><path d="M16.500 17V29M8 18.500H25M9.500 21.500H23.500M10.500 24.500H22.500M12.500 27.500H20.500M7.500 18.500V28M25.500 18.500V28" stroke="#fff" stroke-width="1.300" fill="none"/><circle cx="7.500" cy="27.500" r="1" fill="#fff"/><circle cx="25.500" cy="27.500" r="1" fill="#fff"/></svg>
<svg class="a" style="left:65px;top:67px" width="36" height="20"><circle cx="25" cy="5" r="2.800" fill="#c8202a"/><circle cx="31.300" cy="5" r="2.800" fill="#9a7a72"/><circle cx="31.300" cy="11.300" r="2.800" fill="#9a9a9a"/><text x="2" y="14" font-family="Liberation Serif,serif" font-style="italic" font-size="8" fill="#8a8a8a">my</text><text x="14" y="13.500" font-family="Liberation Sans,sans-serif" font-size="7" fill="#8a8a8a" letter-spacing="-.4">DSP</text></svg>
<svg class="a" style="left:129px;top:67.5px" width="19" height="23"><rect x=".5" y=".5" width="18" height="22" fill="#fff" stroke="#c0c0c0"/><path d="M2.500 3H8M12 3H16.500M6 7H13M2.500 9.500H6M7.500 9.500H11.500M13 9.500H16.500" stroke="#bbb" stroke-width="1"/><rect x="2.500" y="11.500" width="14" height="9.500" fill="#58c838"/><path d="M2.500 14H16.500M2.500 16.500H16.500M2.500 19H16.500" stroke="#b8f0a0" stroke-width=".7"/></svg>
<svg class="a" style="left:2px;top:126px" width="26" height="24"><path d="M8 3L19 1L22 16L11 18Z" fill="#fff" stroke="#aaa" stroke-width=".6"/><path d="M11 2.500L20.500 4.500L18.500 18L9 16Z" fill="#f4f4f4" stroke="#aaa" stroke-width=".6"/><path d="M1 8.500C1 7.500 2 7 3 7H8L10 9H20.500C21.500 9 22 9.500 22 10.500L23.500 7.500L25.500 8L21.500 21.500C21 22.500 20.500 23 19.500 23H3C2 23 1 22 1 21Z" fill="#4a94f0" stroke="#1a58c0" stroke-width=".7"/><path d="M2 12H21L20 22H2.500Z" fill="#78b4fa" opacity=".6"/><circle cx="6" cy="19.500" r="4.300" fill="#f4e800" stroke="#111" stroke-width=".7"/><path d="M6 19.500L3.800 16A4 4 0 0 1 8.200 16ZM6 19.500L10 19.500A4 4 0 0 1 8 23ZM6 19.500L4 23A4 4 0 0 1 2 19.500Z" fill="#111"/><circle cx="6" cy="19.500" r="1" fill="#f4e800"/></svg>
<svg class="a" style="left:5px;top:158px" width="22" height="24"><rect x=".5" y=".5" width="18" height="22" fill="#fff" stroke="#c0c0c0"/><path d="M2.500 3H8M12 3H16.500M6 7H13M2.500 9.500H6M7.500 9.500H11.500M13 9.500H16.500" stroke="#bbb" stroke-width="1"/><rect x="2.500" y="11.500" width="14" height="9.500" fill="#58c838"/><path d="M2.500 14H16.500M2.500 16.500H16.500M2.500 19H16.500" stroke="#b8f0a0" stroke-width=".7"/><path d="M16.500 8.500V16.500M12.500 12.500H20.500" stroke="#e8882a" stroke-width="3.200"/><path d="M16.500 9.300V15.700M13.300 12.500H19.700" stroke="#ffb050" stroke-width="1.600"/></svg>
<svg class="a" style="left:2px;top:189px" width="26" height="26"><rect x="7.500" y="1" width="11" height="13" fill="#fffef0" stroke="#bbb" stroke-width=".6"/><path d="M3 12C3 10 5 9.500 7 9.500H19C21 9.500 23 10 23 12L25 19C25 21 23.500 22 22 22H4C2.500 22 1 21 1 19Z" fill="#e8e8ec" stroke="#888" stroke-width=".7"/><path d="M6.500 10.500H19.500L20.500 14.500H5.500Z" fill="#2a8af0"/><path d="M6.500 10.500H19.500L19.800 12H6.200Z" fill="#8cc8ff"/><path d="M1.500 17H24.500V19C24.500 21 23.500 21.800 22 21.800H4C2.500 21.800 1.500 21 1.500 19Z" fill="#d0d0d8"/><path d="M6 19.500H20L21.500 24.500H4.500Z" fill="#fff" stroke="#aaa" stroke-width=".6"/><circle cx="21.500" cy="13" r=".8" fill="#3c3"/></svg>
<svg class="a" style="left:4px;top:222px" width="23" height="24"><rect x="6.500" y="1.500" width="15" height="17" rx="1.500" fill="#ececec" stroke="#a8a8a8" stroke-width=".9"/><path d="M3.800 12.500H7.200V15.300H10V18.700H7.200V21.500H3.800V18.700H1V15.300H3.800Z" fill="#18a018" stroke="#cfeccf" stroke-width="1.100" stroke-linejoin="round"/></svg>
<svg class="a" style="left:2px;top:254px" width="25" height="25"><path d="M6.500 1H18L22.500 5.500V22H6.500Z" fill="#fff" stroke="#8890b8" stroke-width=".7"/><path d="M8.500 3.500H17M8.500 5.800H17M8.500 8.100H17" stroke="#5a6088" stroke-width="1.100"/><rect x="1" y="10" width="19" height="13.500" fill="#e6e6fa" stroke="#7878c8" stroke-width=".8"/><path d="M1.500 10.500L10.500 18.500L19.500 10.500" fill="#f4f4ff" stroke="#7878c8" stroke-width=".8"/><path d="M19 6.500V18M13.300 12.200H24.700M15 8.200L23 16.200M23 8.200L15 16.200" stroke="#f8c828" stroke-width="1.700" stroke-linecap="round"/><circle cx="19" cy="12.200" r="1.900" fill="#fff6b0"/></svg>
<svg class="a" style="left:2px;top:286px" width="26" height="24"><defs><linearGradient id="gPillG" x1="0" y1="0" x2="1" y2="1"><stop offset="0" stop-color="#7ae07a"/><stop offset=".5" stop-color="#109a10"/><stop offset="1" stop-color="#045a04"/></linearGradient><linearGradient id="gPillW" x1="0" y1="0" x2="1" y2="1"><stop offset="0" stop-color="#fff"/><stop offset="1" stop-color="#b0b0b0"/></linearGradient></defs><g transform="rotate(-38 13 12)"><path d="M13 6.500H6.500A5.500 5.500 0 0 0 6.500 17.500H13Z" fill="url(#gPillG)" stroke="#0a5a0a" stroke-width=".5"/><path d="M13 6.500H19.500A5.500 5.500 0 0 1 19.500 17.500H13Z" fill="url(#gPillW)" stroke="#999" stroke-width=".5"/></g></svg>
<svg class="a" style="left:4.5px;top:322px" width="15" height="17"><rect x=".5" y=".5" width="14" height="15.500" rx="1" fill="#eef4ff" stroke="#7aa4e0" stroke-width=".9"/><path d="M3 3.500H4M11 3.500H12M3 13H4M11 13H12" stroke="#3a6ad0" stroke-width="1.200"/></svg>
<svg class="a" style="left:2px;top:349px" width="26" height="26"><g transform="scale(.72) translate(0 0)"><use href="#user"/></g><path d="M10.500 17.500L13.500 21.500L23.500 9.500" fill="none" stroke="#1a8a0a" stroke-width="3.800"/><path d="M10.500 17.500L13.500 21.500L23.500 9.500" fill="none" stroke="#48d828" stroke-width="2.200"/></svg>
<svg class="a" style="left:5px;top:381px" width="20" height="25"><defs><linearGradient id="gFl" x1="0" y1="0" x2="1" y2="0"><stop offset="0" stop-color="#8a0000"/><stop offset=".35" stop-color="#ff5a5a"/><stop offset=".6" stop-color="#e01010"/><stop offset="1" stop-color="#7a0000"/></linearGradient></defs><path d="M7 1H13V3H12.300V8L18.500 20.500C19 22.500 18 23.500 16 23.800C12 24.300 8 24.300 4 23.800C2 23.500 1 22.500 1.500 20.500L7.700 8V3H7Z" fill="url(#gFl)" stroke="#5a0000" stroke-width=".5"/><rect x="7" y="1" width="6" height="2" fill="#c8a0a0"/><ellipse cx="10" cy="22.500" rx="8" ry="1.600" fill="#4a0000" opacity=".45"/></svg>
<svg class="a" style="left:51px;top:439px" width="30" height="36"><g transform="scale(.98)"><use href="#user"/></g></svg>
<svg class="a" style="left:87px;top:444px" width="28" height="28"><circle cx="14" cy="14" r="12" fill="#fff" stroke="#2458e0" stroke-width="2.600"/><circle cx="14" cy="14" r="13.300" fill="none" stroke="#1838a8" stroke-width=".5"/><path d="M14.0 5.7L14.0 4.0" stroke="#888" stroke-width="1"/><path d="M18.1 6.8L19.0 5.3" stroke="#888" stroke-width="1"/><path d="M21.2 9.8L22.7 9.0" stroke="#888" stroke-width="1"/><path d="M22.3 14.0L24.0 14.0" stroke="#888" stroke-width="1"/><path d="M21.2 18.1L22.7 19.0" stroke="#888" stroke-width="1"/><path d="M18.1 21.2L19.0 22.7" stroke="#888" stroke-width="1"/><path d="M14.0 22.3L14.0 24.0" stroke="#888" stroke-width="1"/><path d="M9.9 21.2L9.0 22.7" stroke="#888" stroke-width="1"/><path d="M6.8 18.2L5.3 19.0" stroke="#888" stroke-width="1"/><path d="M5.7 14.0L4.0 14.0" stroke="#888" stroke-width="1"/><path d="M6.8 9.8L5.3 9.0" stroke="#888" stroke-width="1"/><path d="M9.8 6.8L9.0 5.3" stroke="#888" stroke-width="1"/><path d="M14 14L7.500 9.500" stroke="#445" stroke-width="1.500"/><path d="M14 14L19.500 12.500" stroke="#445" stroke-width="1.500"/><path d="M14 14L8.500 21.500" stroke="#f03030" stroke-width=".9"/></svg>
<svg class="a" style="left:67px;top:458px" width="24" height="17"><path d="M1.500 5.500H12V1L22.500 8.500L12 16V11.500H1.500Z" fill="url(#gGreenA)" stroke="#3a7a2a" stroke-width="1"/></svg>
<svg class="a" style="left:67px;top:526px" width="34" height="30"><rect x="1" y="1" width="31" height="24" fill="#fff" stroke="#2a62d0" stroke-width="1.400"/><rect x="1.500" y="1.500" width="30" height="4.500" fill="#3a7af0"/><path d="M1.500 11H31.500M1.500 16H31.500M1.500 21H31.500M7.500 6V25M13.500 6V25M19.500 6V25M25.500 6V25" stroke="#d0d8e8" stroke-width="1.200"/><rect x="25" y="2.500" width="1.500" height="1.500" fill="#fff"/><rect x="28" y="2.500" width="1.500" height="1.500" fill="#fff"/><rect x="16.500" y="13.500" width="14.500" height="14.500" rx="1.500" fill="#ececec" stroke="#999" stroke-width=".9"/></svg>
</div>
<svg width="0" height="0" style="position:absolute"><defs>
<radialGradient id="gSkin" cx="40%" cy="30%" r="75%"><stop offset="0" stop-color="#fff6e0"/><stop offset=".55" stop-color="#f6cf8c"/><stop offset="1" stop-color="#d99a45"/></radialGradient>
<radialGradient id="gPink" cx="40%" cy="30%" r="75%"><stop offset="0" stop-color="#fff4f0"/><stop offset=".6" stop-color="#f8c8b8"/><stop offset="1" stop-color="#e08878"/></radialGradient>
<radialGradient id="gGrayH" cx="40%" cy="30%" r="75%"><stop offset="0" stop-color="#f4f4f4"/><stop offset=".6" stop-color="#c4c4c4"/><stop offset="1" stop-color="#8c8c8c"/></radialGradient>
<linearGradient id="gBlueB" x1="0" y1="0" x2="0" y2="1"><stop offset="0" stop-color="#f2f8ff"/><stop offset=".55" stop-color="#9cc4f8"/><stop offset="1" stop-color="#2a64dc"/></linearGradient>
<linearGradient id="gGrayB" x1="0" y1="0" x2="0" y2="1"><stop offset="0" stop-color="#f2f2f2"/><stop offset=".5" stop-color="#cfcfcf"/><stop offset="1" stop-color="#9a9a9a"/></linearGradient>
<linearGradient id="gTealB" x1="0" y1="0" x2="0" y2="1"><stop offset="0" stop-color="#e8fff8"/><stop offset=".6" stop-color="#b4ead8"/><stop offset="1" stop-color="#86d4bc"/></linearGradient>
<linearGradient id="gGreenA" x1="0" y1="0" x2="0" y2="1"><stop offset="0" stop-color="#8cff6a"/><stop offset=".5" stop-color="#22d80e"/><stop offset="1" stop-color="#0a9a00"/></linearGradient>
<radialGradient id="gRedC" cx="40%" cy="25%" r="80%"><stop offset="0" stop-color="#ff9a9a"/><stop offset=".45" stop-color="#ee1c1c"/><stop offset="1" stop-color="#a00000"/></radialGradient>
<radialGradient id="gBlueC" cx="40%" cy="25%" r="80%"><stop offset="0" stop-color="#8ab0ff"/><stop offset=".5" stop-color="#1c50e6"/><stop offset="1" stop-color="#0a2ab0"/></radialGradient>
<radialGradient id="gLens" cx="40%" cy="35%" r="70%"><stop offset="0" stop-color="#e6f2ff"/><stop offset="1" stop-color="#8ec0ff"/></radialGradient>
<linearGradient id="gMetal" x1="0" y1="0" x2="1" y2="1"><stop offset="0" stop-color="#f4f4f8"/><stop offset="1" stop-color="#a8a8b4"/></linearGradient>
<linearGradient id="gRedH" x1="0" y1="0" x2="1" y2="1"><stop offset="0" stop-color="#ff8a7a"/><stop offset=".5" stop-color="#e02018"/><stop offset="1" stop-color="#8a0a08"/></linearGradient>
<g id="user"><path d="M3 28.500C3 19.500 8 15.500 15.800 15.500S28.500 19.500 28.500 28.500C28.500 31.800 23.500 32.800 15.800 32.800S3 31.800 3 28.500Z" fill="url(#gBlueB)" stroke="#2a58c0" stroke-width=".8"/><path d="M10.5 16.5L16 23L21.5 16.5C19 15.6 13 15.6 10.5 16.5Z" fill="#fff"/><path d="M14.600 19.500H17.200L18.400 28L15.900 31L13.400 28Z" fill="#d81c1c"/><circle cx="16" cy="9" r="8.3" fill="url(#gSkin)" stroke="#c8903c" stroke-width=".5"/></g>
<g id="userg"><path d="M3 28.500C3 19.500 8 15.500 15.800 15.500S28.500 19.500 28.500 28.500C28.500 31.800 23.500 32.800 15.800 32.800S3 31.800 3 28.500Z" fill="url(#gGrayB)" stroke="#8a8a8a" stroke-width=".8"/><path d="M10.5 16.5L16 23L21.5 16.5C19 15.6 13 15.6 10.5 16.5Z" fill="#f4f4f4"/><path d="M14.600 19.500H17.200L18.400 28L15.900 31L13.400 28Z" fill="#8c8c8c"/><circle cx="16" cy="9" r="8.3" fill="url(#gGrayH)" stroke="#8a8a8a" stroke-width=".5"/></g>
<g id="wrenchsd"><path d="M2 8.500C.5 12.500 4 16.500 9 15.500L22 29C24.500 31.500 30.500 26 28 23.500L15 10C16.500 5.500 13.500 1.500 8.500 1.500L11.500 6L10 9.500L5.500 10.500Z" fill="url(#gMetal)" stroke="#80808c" stroke-width=".9"/><path d="M27.500 2.500L29.500 4.500L18 16.500L15.500 14.500Z" fill="#e6e6ea" stroke="#777" stroke-width=".6"/><path d="M29 .8L31 2.800L29.300 5L27 3Z" fill="#888"/><path d="M14.500 13L19 17.500L9 29C6.500 31.500 .5 27 3 23.500Z" fill="url(#gRedH)" stroke="#8a1410" stroke-width=".6"/></g>
<g id="addrow"><rect x="1.500" y="1.500" width="11" height="14" fill="#fff" stroke="#9a9a9a"/><rect x="2.500" y="5" width="9" height="7" fill="url(#gGreenA)"/><path d="M10 10.500H13V8.500L17 11.500L13 14.500V12.500H10Z" fill="#f08a1c" stroke="#c86a0a" stroke-width=".5"/></g>
</defs></svg>
<svg class="a" style="left:43.5px;top:53.5px" width="32" height="36"><use href="#user"/><circle cx="11" cy="22" r="7.3" fill="#fff" stroke="#111" stroke-width="1.6"/><path d="M5.5 27.500L1 32.500" stroke="#f0941c" stroke-width="2.600" stroke-linecap="round"/><path d="M16.500 27.500L19 25" stroke="#c01818" stroke-width="2"/></svg>
<svg class="a" style="left:43.5px;top:113.5px" width="32" height="36"><use href="#user"/></svg>
<svg class="a" style="left:47px;top:176px" width="23" height="30"><rect x=".5" y=".5" width="22" height="29" rx="2.500" fill="#dcdcdc" stroke="#9a9a9a"/><rect x="3" y="3" width="17" height="7.500" fill="#8fc8a4" stroke="#5a9a74" stroke-width=".6"/><rect x="3.500" y="5" width="16" height="1.500" fill="#5aa47c"/><rect x="3.5" y="13.5" width="3" height="2.200" rx=".6" fill="#f4f4f4" stroke="#aaa" stroke-width=".3"/><rect x="7.8" y="13.5" width="3" height="2.200" rx=".6" fill="#f4f4f4" stroke="#aaa" stroke-width=".3"/><rect x="12.1" y="13.5" width="3" height="2.200" rx=".6" fill="#f4f4f4" stroke="#aaa" stroke-width=".3"/><rect x="16.4" y="13.5" width="3" height="2.200" rx=".6" fill="#e82020" stroke="#aaa" stroke-width=".3"/><rect x="3.5" y="17.1" width="3" height="2.200" rx=".6" fill="#f4f4f4" stroke="#aaa" stroke-width=".3"/><rect x="7.8" y="17.1" width="3" height="2.200" rx=".6" fill="#f4f4f4" stroke="#aaa" stroke-width=".3"/><rect x="12.1" y="17.1" width="3" height="2.200" rx=".6" fill="#f4f4f4" stroke="#aaa" stroke-width=".3"/><rect x="16.4" y="17.1" width="3" height="2.200" rx=".6" fill="#28c028" stroke="#aaa" stroke-width=".3"/><rect x="3.5" y="20.7" width="3" height="2.200" rx=".6" fill="#f4f4f4" stroke="#aaa" stroke-width=".3"/><rect x="7.8" y="20.7" width="3" height="2.200" rx=".6" fill="#f4f4f4" stroke="#aaa" stroke-width=".3"/><rect x="12.1" y="20.7" width="3" height="2.200" rx=".6" fill="#f4f4f4" stroke="#aaa" stroke-width=".3"/><rect x="16.4" y="20.7" width="3" height="2.200" rx=".6" fill="#3c8cf0" stroke="#aaa" stroke-width=".3"/><rect x="3.5" y="24.3" width="3" height="2.200" rx=".6" fill="#f4f4f4" stroke="#aaa" stroke-width=".3"/><rect x="7.8" y="24.3" width="3" height="2.200" rx=".6" fill="#f4f4f4" stroke="#aaa" stroke-width=".3"/><rect x="12.1" y="24.3" width="3" height="2.200" rx=".6" fill="#f4f4f4" stroke="#aaa" stroke-width=".3"/><rect x="16.4" y="24.3" width="3" height="2.200" rx=".6" fill="#f0c020" stroke="#aaa" stroke-width=".3"/></svg>
<svg class="a" style="left:42px;top:233px" width="34" height="36"><defs><linearGradient id="gAg" x1="0" y1="0" x2="0" y2="1"><stop offset="0" stop-color="#e8f0ff"/><stop offset="1" stop-color="#1c6cf0"/></linearGradient></defs><g transform="rotate(-16 17 18)"><rect x="7.300" y="6.300" width="21" height="26" fill="#444" opacity=".55"/><rect x="6" y="5" width="21" height="26" fill="#fff" stroke="#667" stroke-width=".8"/><rect x="6.400" y="24.500" width="20.200" height="6.200" fill="url(#gAg)"/><path d="M7 5.200H26" stroke="#333" stroke-width="1.800" stroke-dasharray="1.200 1.600"/><text x="16.500" y="23" font-family="Liberation Sans,sans-serif" font-weight="bold" font-size="17" fill="#f0505a" text-anchor="middle">3</text></g></svg>
<svg class="a" style="left:42.3px;top:294.2px" width="33" height="33"><circle cx="16.500" cy="16.500" r="14.500" fill="#fff" stroke="#2a5ee4" stroke-width="2.600"/><circle cx="16.500" cy="16.500" r="15.700" fill="none" stroke="#1838a8" stroke-width=".7"/><circle cx="16.500" cy="16.500" r="12.900" fill="none" stroke="#9ab8f4" stroke-width="1"/><path d="M16.5 6.5L16.5 4.5" stroke="#888" stroke-width="1.200"/><path d="M21.5 7.8L22.5 6.1" stroke="#888" stroke-width="1.200"/><path d="M25.2 11.5L26.9 10.5" stroke="#888" stroke-width="1.200"/><path d="M26.5 16.5L28.5 16.5" stroke="#888" stroke-width="1.200"/><path d="M25.2 21.5L26.9 22.5" stroke="#888" stroke-width="1.200"/><path d="M21.5 25.2L22.5 26.9" stroke="#888" stroke-width="1.200"/><path d="M16.5 26.5L16.5 28.5" stroke="#888" stroke-width="1.200"/><path d="M11.5 25.2L10.5 26.9" stroke="#888" stroke-width="1.200"/><path d="M7.8 21.5L6.1 22.5" stroke="#888" stroke-width="1.200"/><path d="M6.5 16.5L4.5 16.5" stroke="#888" stroke-width="1.200"/><path d="M7.8 11.5L6.1 10.5" stroke="#888" stroke-width="1.200"/><path d="M11.5 7.8L10.5 6.1" stroke="#888" stroke-width="1.200"/><path d="M16.500 16.500L8 11" stroke="#556" stroke-width="1.400"/><path d="M16.500 16.500L23 15" stroke="#556" stroke-width="1.400"/><path d="M16.500 16.500L9.500 25.500" stroke="#f03030" stroke-width=".9"/></svg>
<svg class="a" style="left:42px;top:354px" width="34" height="34"><path d="M8.500 1.500H25L30.500 7V31H8.500Z" fill="#fff" stroke="#8890b8" stroke-width=".8"/><path d="M11 5H24M11 8H24M11 11H24" stroke="#5a6088" stroke-width="1.500"/><rect x="1.500" y="13.500" width="25" height="18" fill="#e6e6fa" stroke="#7878c8" stroke-width=".9"/><path d="M2 14L14 25L26 14" fill="#f4f4ff" stroke="#7878c8" stroke-width=".9"/><path d="M25.500 9V24M18 16.500H33M20.200 11.200L30.800 21.800M30.800 11.200L20.200 21.800" stroke="#f8c828" stroke-width="2.200" stroke-linecap="round"/><circle cx="25.500" cy="16.500" r="2.500" fill="#fff6b0"/></svg>
<svg class="a" style="left:42px;top:414px" width="34" height="32"><path d="M1 22C1 16 4 13.500 9 13.500S17 16 17 22V24H1Z" fill="#8a58c8"/><path d="M3.500 9C3.500 4 6 2.500 9 2.500S14.500 4 14.500 9C14.500 12 15.500 13 16 14H2C2.500 13 3.500 12 3.500 9Z" fill="#f0c030"/><circle cx="9" cy="9" r="4.300" fill="url(#gSkin)"/><path d="M16 22C16 15 19 12.500 24 12.500S32.500 15 32.500 22V24H16Z" fill="#b8bcc8"/><path d="M21.500 13L24 17L26.500 13Z" fill="#fff"/><path d="M23.300 15H24.700L25.500 22L24 24L22.500 22Z" fill="#d82020"/><circle cx="24" cy="7" r="5.300" fill="url(#gSkin)"/><path d="M18.500 6.500C18.500 2 22 .5 25 1.500C28.500 2 30 5 29 8C27 5 23 4.500 18.500 6.500Z" fill="#7a4a20"/><path d="M8.500 30C8.500 24.500 11.500 22.500 16.500 22.500S24.500 24.500 24.500 30C24.500 31.500 8.500 31.500 8.500 30Z" fill="url(#gBlueB)" stroke="#3a78d8" stroke-width=".6"/><circle cx="16.500" cy="18" r="4.800" fill="url(#gSkin)"/><path d="M11.500 17.500C11.500 13.500 15 12 18 13C20.500 13.500 22 15.500 21.500 18C19.500 15.500 15.500 15.500 11.500 17.500Z" fill="#8a5a28"/></svg>
<svg class="a" style="left:43px;top:475px" width="32" height="34"><rect x="5.500" y="4.500" width="23" height="26" fill="#f4f4f4" stroke="#777" stroke-width="1"/><circle cx="15" cy="19" r="6.500" fill="none" stroke="#4a7ae0" stroke-width="1"/><rect x="16.500" y="19.500" width="7" height="7" fill="none" stroke="#e05050" stroke-width="1"/><path d="M9 1.500H29.500V22Z" fill="#f8c890" stroke="#e8882a" stroke-width="1.400"/><path d="M17 4.500H26.500V14Z" fill="#f4f4f4" stroke="#e8882a" stroke-width="1"/><path d="M3 20L13.500 9.500L16.500 12.500L6 23L2 24Z" fill="#f89a20" stroke="#c86a10" stroke-width=".7"/><path d="M13.500 9.500L15.500 7.500L18.500 10.500L16.500 12.500Z" fill="#e03030"/></svg>
<svg class="a" style="left:44px;top:535px" width="30" height="32"><rect x="1" y="1" width="27" height="29" rx="2" fill="#fcfcfc" stroke="#333" stroke-width="1.200"/><path d="M2 30.800H28.500" stroke="#999" stroke-width="1"/><rect x="4.500" y="4.500" width="20" height="4.500" fill="#0c78ea"/><rect x="4.500" y="12.500" width="20" height="14" fill="#0c78ea"/><path d="M6 6.800H13M6.500 15H20M6.500 17.200H21M6.500 19.400H20M6.500 21.600H16M6.500 23.800H19" stroke="#9cd0ff" stroke-width=".8"/></svg>
<svg class="a" style="left:43.5px;top:596px" width="32" height="32"><use href="#wrenchsd"/></svg>
<svg class="a" style="left:45px;top:751px" width="28" height="28"><circle cx="14" cy="14" r="13" fill="url(#gBlueC)" stroke="#0a2a9a" stroke-width=".8"/><path d="M10.500 12V9.500C10.500 5.500 17.500 5.500 17.500 9.500V12" fill="none" stroke="#fff" stroke-width="2"/><rect x="8.300" y="11.800" width="11.400" height="9" rx="1" fill="#1c54e0" stroke="#fff" stroke-width="1.600"/></svg>
<svg class="a" style="left:45px;top:811px" width="28" height="28"><circle cx="14" cy="14" r="13" fill="url(#gRedC)" stroke="#8a0000" stroke-width=".8"/><path d="M9.200 9.500A7 7 0 1 0 18.800 9.500" fill="none" stroke="#fff" stroke-width="2.400" stroke-linecap="round"/><path d="M14 5V14.500" stroke="#fff" stroke-width="2.400" stroke-linecap="round"/></svg>
<svg class="a" style="left:137.3px;top:64.5px" width="26" height="24"><defs><linearGradient id="gGen" x1="0" y1="0" x2="0" y2="1"><stop offset="0" stop-color="#8a8a8a"/><stop offset=".5" stop-color="#3a3a3a"/><stop offset="1" stop-color="#050505"/></linearGradient></defs><circle cx="10" cy="14.500" r="6.500" fill="none" stroke="url(#gGen)" stroke-width="3.400"/><path d="M14.500 10L21 3.500" stroke="#444" stroke-width="3"/><path d="M15 2.500H22.500V10Z" fill="#555"/></svg>
<svg class="a" style="left:1108px;top:60px" width="32" height="34"><path d="M5.500 30C5.500 22 8.500 17.500 16 17.500S26.500 22 26.500 30C26.500 32.500 5.500 32.500 5.500 30Z" fill="url(#gTealB)" stroke="#6cc0a8" stroke-width=".7"/><path d="M12.500 18.500C12.500 24 16 24 16 28M19.500 18.500C19.500 23 16 24 16 28" fill="none" stroke="#999" stroke-width="1"/><circle cx="16" cy="29" r="1.500" fill="#fff" stroke="#888" stroke-width=".8"/><circle cx="16" cy="10" r="7.800" fill="url(#gSkin)"/><path d="M8 10C7 4 11 1 16 1.500C21 1.500 25 5 24 9.500C22 8 20 7.500 18.500 6C15 9 11 9.500 8 10Z" fill="#9a6428"/></svg>
<svg class="a" style="left:1145px;top:60px" width="34" height="34"><path d="M21 20L31 30.500" stroke="#c87818" stroke-width="5" stroke-linecap="round"/><path d="M21.500 20.500L30.800 30.200" stroke="#ffb030" stroke-width="3" stroke-linecap="round"/><circle cx="13.500" cy="13" r="10.500" fill="url(#gLens)" stroke="#8a8a8a" stroke-width="2.400"/><circle cx="13.500" cy="13" r="11.700" fill="none" stroke="#666" stroke-width=".5"/></svg>
<svg class="a" style="left:1184.5px;top:60.5px" width="32" height="36"><use href="#userg"/><path d="M15.500 20.500H9.500V16.800L0 24.500L9.500 32.200V28.500H15.500Z" fill="url(#gGreenA)" stroke="#0a8a00" stroke-width=".8"/></svg>
<svg class="a" style="left:1223px;top:60.5px" width="34" height="36"><use href="#userg"/><path d="M15.500 20.500H21.500V16.800L31 24.500L21.500 32.200V28.500H15.500Z" fill="url(#gGreenA)" stroke="#0a8a00" stroke-width=".8"/></svg>
<svg class="a" style="left:1260px;top:61px" width="32" height="32"><circle cx="16" cy="16" r="15" fill="url(#gRedC)" stroke="#900" stroke-width=".8"/><path d="M10 10L22 22M22 10L10 22" stroke="#fff" stroke-width="4.600" stroke-linecap="round"/></svg>
<svg class="a" style="left:1299px;top:61px" width="28" height="32"><path d="M5 26C5 19 8.500 15.500 15 15.500S25 19 25 26C25 29 20 30 15 30S5 29 5 26Z" fill="url(#gBlueB)" stroke="#2a58c0" stroke-width=".8"/><path d="M10.500 16.500L15 21L19.500 16.500Z" fill="#fff" opacity=".8"/><circle cx="15" cy="10" r="7" fill="url(#gPink)" stroke="#d08878" stroke-width=".5"/><path d="M5.500 1.500V9.500M1.500 5.500H9.500" stroke="#d87a10" stroke-width="3.400"/><path d="M5.500 2.300V8.700M2.300 5.500H8.700" stroke="#ffc040" stroke-width="1.800"/></svg>
<svg class="a" style="left:1339px;top:64px" width="27" height="27"><rect x=".5" y=".5" width="25" height="25" rx="2" fill="#c8c8c8" stroke="#c0c0c0"/><rect x="5" y="1" width="12" height="8" fill="#d6d6d6"/><rect x="6.500" y="2" width="3" height="4.500" fill="#c4c4c4"/><rect x="3.500" y="12" width="19" height="13" fill="#cfcfcf"/><path d="M5 15H21M5 18H21M5 21H21" stroke="#c4c4c4" stroke-width="1"/></svg>
<svg class="a" style="left:1373px;top:59px" width="36" height="36"><use href="#user"/><path d="M13.500 25L17.500 30.500L31 14" fill="none" stroke="#1a8a0a" stroke-width="4.600" stroke-linejoin="miter"/><path d="M13.500 25L17.500 30.500L31 14" fill="none" stroke="#48d828" stroke-width="2.800"/></svg>
<svg class="a" style="left:141.5px;top:278px" width="16.5" height="15.5" viewBox="0 0 32 32"><use href="#wrenchsd"/></svg>
<svg class="a" style="left:147.5px;top:325px" width="16.5" height="15.5" viewBox="0 0 32 32"><use href="#wrenchsd"/></svg>
<svg class="a" style="left:705px;top:142px" width="14" height="11"><rect x=".5" y=".5" width="12" height="9" fill="#fff" stroke="#222" stroke-width="1"/><rect x="1" y="1" width="4" height="1.200" fill="#ffc030"/><rect x="6.500" y="1" width="5" height="1.200" fill="#b8dcff"/><rect x="3" y="3" width="2.500" height="5.500" fill="#e4e4e4"/><circle cx="9" cy="5.800" r="1.600" fill="#fff" stroke="#e84040" stroke-width="1"/></svg>
<svg class="a" style="left:1191px;top:276px" width="18" height="18"><defs><radialGradient id="gGlobe" cx="38%" cy="28%" r="75%"><stop offset="0" stop-color="#e8f6ff"/><stop offset=".35" stop-color="#58a8f8"/><stop offset="1" stop-color="#1448b8"/></radialGradient></defs><circle cx="9" cy="9" r="8.300" fill="url(#gGlobe)" stroke="#6a74c8" stroke-width=".9"/><path d="M3.500 6C5 4.500 7.500 4.500 8.500 6S8 8 9.500 9S11.500 11.500 10 13S7 11 5.500 10S2.500 8 3.500 6Z" fill="#1a7a3a" opacity=".9"/><path d="M11.500 5C13.500 4.500 15 6.500 15 8.500S13.500 9.500 13 8S10.500 6 11.500 5Z" fill="#1a7a3a" opacity=".9"/><path d="M6 15.300C8 14.500 11 15 12.500 15.600C10.500 17 8 17 6 15.300Z" fill="#2a9a4a"/><ellipse cx="7" cy="5" rx="3.500" ry="2.200" fill="#fff" opacity=".45"/></svg>
<svg class="a" style="left:1193.5px;top:306px" width="16" height="17"><rect x=".5" y=".5" width="8.500" height="15" fill="#fff" stroke="#a098b0" stroke-width=".9"/><path d="M1 2.500H8.500M1 4H8.500M1 12.500H8.500" stroke="#ddd" stroke-width=".6"/><rect x=".5" y="4.800" width="8.500" height="6" fill="#3cd63c"/><path d="M10.500 11H14.500" stroke="#f08a1c" stroke-width="1.600"/><path d="M12.500 9V13" stroke="#f08a1c" stroke-width="1.600"/></svg>
<svg class="a" style="left:1193.5px;top:331.5px" width="16" height="17"><rect x=".5" y=".5" width="8.500" height="15" fill="#fff" stroke="#a098b0" stroke-width=".9"/><path d="M1 2.500H8.500M1 4H8.500M1 12.500H8.500" stroke="#ddd" stroke-width=".6"/><rect x=".5" y="4.800" width="8.500" height="6" fill="#ff3a18"/><path d="M10.500 11H14.500" stroke="#f08a1c" stroke-width="1.600"/></svg>
<svg class="a" style="left:473.5px;top:783.5px" width="16" height="17"><rect x=".5" y=".5" width="8.500" height="15" fill="#fff" stroke="#a098b0" stroke-width=".9"/><path d="M1 2.500H8.500M1 4H8.500M1 12.500H8.500" stroke="#ddd" stroke-width=".6"/><rect x=".5" y="4.800" width="8.500" height="6" fill="#3cd63c"/><path d="M10.500 11H14.500" stroke="#f08a1c" stroke-width="1.600"/><path d="M12.500 9V13" stroke="#f08a1c" stroke-width="1.600"/></svg>
<svg class="a" style="left:835.5px;top:783.5px" width="16" height="17"><rect x=".5" y=".5" width="8.500" height="15" fill="#fff" stroke="#a098b0" stroke-width=".9"/><path d="M1 2.500H8.500M1 4H8.500M1 12.500H8.500" stroke="#ddd" stroke-width=".6"/><rect x=".5" y="4.800" width="8.500" height="6" fill="#3cd63c"/><path d="M10.500 11H14.500" stroke="#f08a1c" stroke-width="1.600"/><path d="M12.500 9V13" stroke="#f08a1c" stroke-width="1.600"/></svg>
<svg class="a" style="left:1197.5px;top:783.5px" width="16" height="17"><rect x=".5" y=".5" width="8.500" height="15" fill="#fff" stroke="#a098b0" stroke-width=".9"/><path d="M1 2.500H8.500M1 4H8.500M1 12.500H8.500" stroke="#ddd" stroke-width=".6"/><rect x=".5" y="4.800" width="8.500" height="6" fill="#3cd63c"/><path d="M10.500 11H14.500" stroke="#f08a1c" stroke-width="1.600"/><path d="M12.500 9V13" stroke="#f08a1c" stroke-width="1.600"/></svg>
<svg class="a" style="left:805px;top:442px" width="32" height="34"><defs><radialGradient id="gHead" cx="55%" cy="35%" r="70%"><stop offset="0" stop-color="#dcdcdc"/><stop offset="1" stop-color="#9a9a9a"/></radialGradient></defs><path d="M9 32.500C9.500 29 9 27.500 8.500 26.500C5.500 26.500 3 25.500 2.500 23.500C2.500 22 3 21 2.500 20C1.500 19 1 18.500 1.500 17.500C2 16 3.500 14.500 3.500 13C3.500 5.500 9 1 16 1C24 1 29.500 6.500 29.500 13.500C29.500 19.500 26 23 23 25.500C22.500 28 23 30 24 32.500Z" fill="url(#gHead)" stroke="#888" stroke-width=".8"/><path d="M17 11C19 10.500 20.500 12 20 15C19.800 17 18.500 18.500 17.500 18.500" fill="none" stroke="#eee" stroke-width="1"/><path d="M5.500 13.500L8 14.500" stroke="#555" stroke-width="1.400"/><path d="M8.500 26.500C13 26 18 24 21 20" fill="none" stroke="#7c7c7c" stroke-width=".8"/></svg>
<svg class="a" style="left:837px;top:443px" width="14" height="22"><path d="M1.500 1.500V17L5 13.500L8 20.500L10.500 19.500L7.500 12.500H12.500Z" fill="#fff" stroke="#000" stroke-width="1.100" stroke-linejoin="miter"/></svg>
<svg class="a" style="left:881px;top:466px" width="17" height="17"><path d="M6 1.500H11V6H15.500V11H11V15.500H6V11H1.500V6H6Z" fill="#1a9a1a" stroke="#2a8a2a" stroke-width="2.400" stroke-linejoin="round"/><path d="M6 1.500H11V6H15.500V11H11V15.500H6V11H1.500V6H6Z" fill="#16a016" stroke="#d8f4d8" stroke-width="1" stroke-linejoin="round"/><path d="M6.800 2.300H10.200V6.800H14.700V10.200H10.200V14.700H6.800V10.200H2.300V6.800H6.800Z" fill="#0a8a0a"/></svg>
<svg class="a" style="left:880.5px;top:499.5px" width="17" height="9"><rect x="1" y="1" width="15" height="7" rx="2" fill="#c80000" stroke="#d86a50" stroke-width="1.200"/><rect x="2.200" y="2.200" width="12.600" height="4.600" rx="1.200" fill="#d40808" stroke="#fbe0d8" stroke-width=".7"/></svg>
<svg class="a" style="left:8px;top:6px" width="20" height="20"><path d="M2 7C3 11 5 12 7.500 12.500C8 15.500 10.500 17.500 13 16C15 14.500 15.500 12 15 10.500M12.500 8.500C14 7.500 16 8.500 16.500 10.500" fill="none" stroke="#b0b0a0" stroke-width=".8"/><circle cx="6.700" cy="6.800" r="3" fill="none" stroke="#ee1c24" stroke-width="3"/></svg>
<svg class="a" style="left:221px;top:848px" width="16" height="18"><path d="M1 7L8 1L15 6.500L14 15.500L3 17Z" fill="#c4c8f8" stroke="#8088d8" stroke-width=".7"/><path d="M2.500 7.500L9 11L14 6.500L8 2Z" fill="#3a3ab8"/><path d="M2.500 8.500L8.500 12L14.200 8" fill="none" stroke="#fff" stroke-width=".7"/></svg>
<svg class="a" style="left:1155px;top:844px" width="20" height="26"><path d="M2 22C2 15 5 12.500 10 12.500S18 15 18 22C18 24.500 2 24.500 2 22Z" fill="url(#gTealB)" stroke="#7ccab4" stroke-width=".6"/><path d="M7.500 13C7.500 17 10 17.500 10 20M12.500 13C12.500 17 10 17.500 10 20" fill="none" stroke="#999" stroke-width=".8"/><circle cx="10" cy="21" r="1.100" fill="#fff" stroke="#888" stroke-width=".6"/><circle cx="10" cy="7" r="6" fill="url(#gSkin)"/><path d="M3.800 7.500C3 3 6 .6 10 1C14 1 17 3.500 16 7C14.500 6 13 5.500 12 4.500C9.500 6.500 6.500 7 3.800 7.500Z" fill="#a06a28"/></svg>
</body></html>
